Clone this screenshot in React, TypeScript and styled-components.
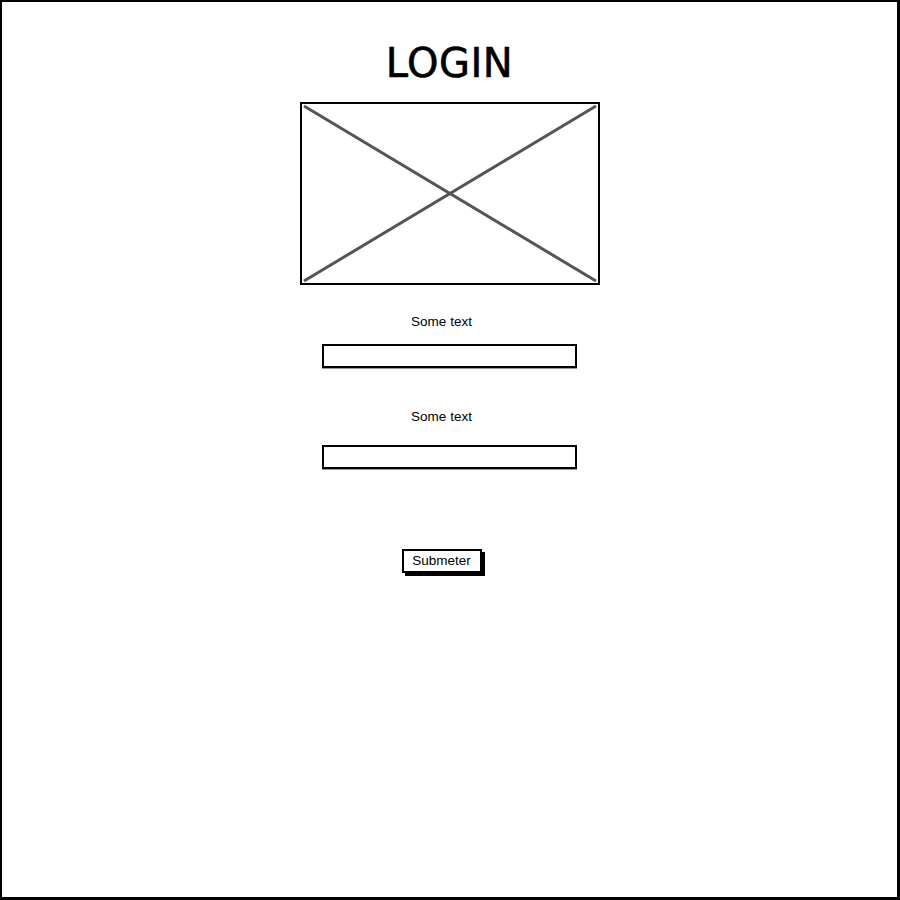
import React from "react";
import styled, { createGlobalStyle } from "styled-components";

const GlobalStyle = createGlobalStyle`
  html, body {
    margin: 0;
    padding: 0;
    background: #ffffff;
  }
`;

const Frame = styled.div`
  box-sizing: border-box;
  width: 900px;
  height: 900px;
  border: 2px solid #000;
  border-right-width: 3px;
  border-bottom-width: 3px;
  display: flex;
  flex-direction: column;
  align-items: center;
  padding-top: 38px;
  font-family: "Liberation Sans", Arial, sans-serif;
  color: #000;
`;

const Title = styled.h1`
  margin: 0;
  font-family: "DejaVu Sans", sans-serif;
  font-weight: normal;
  font-size: 40px;
  line-height: 46px;
  letter-spacing: 0.5px;
  -webkit-text-stroke: 0.6px #000;
`;

const Placeholder = styled.div`
  margin-top: 16px;
  width: 300px;
  height: 183px;
  box-sizing: border-box;
  border: 2px solid #000;
  svg {
    display: block;
  }
`;

const Field = styled.div`
  display: flex;
  flex-direction: column;
  align-items: center;
`;

const Label = styled.span<{ $top: number }>`
  margin-top: ${(p) => p.$top}px;
  margin-right: 16px;
  font-size: 13.5px;
  line-height: 16px;
`;

const Input = styled.div<{ $top: number }>`
  margin-top: ${(p) => p.$top}px;
  width: 255px;
  height: 24px;
  box-sizing: border-box;
  border: 2px solid #000;
  background: #fff;
  box-shadow: 0 1px 0 #9a9a9a;
`;

const Button = styled.button`
  margin-top: 80px;
  margin-right: 16px;
  box-sizing: border-box;
  height: 24px;
  width: 80px;
  padding: 0;
  border: 2px solid #000;
  background: #fff;
  box-shadow: 3px 3px 0 #000;
  font-family: "Liberation Sans", Arial, sans-serif;
  font-size: 13.5px;
  line-height: 18px;
  color: #000;
`;

export default function App() {
  return (
    <>
      <GlobalStyle />
      <Frame>
        <Title>LOGIN</Title>
        <Placeholder>
          <svg width="296" height="179" viewBox="0 0 296 179">
            <line x1="2" y1="2" x2="294" y2="177" stroke="#555" strokeWidth="3" />
            <line x1="294" y1="2" x2="2" y2="177" stroke="#555" strokeWidth="3" />
          </svg>
        </Placeholder>
        <Field>
          <Label $top={29}>Some text</Label>
          <Input $top={14} />
        </Field>
        <Field>
          <Label $top={41}>Some text</Label>
          <Input $top={20} />
        </Field>
        <Button>Submeter</Button>
      </Frame>
    </>
  );
}
